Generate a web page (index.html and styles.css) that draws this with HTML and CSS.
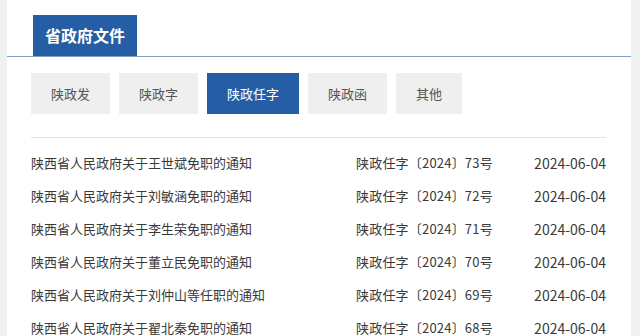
FILE: index.html
```html
<!DOCTYPE html>
<html lang="zh-CN">
    <head>
        <meta charset="UTF-8" />
        <meta name="viewport" content="width=device-width, initial-scale=1.0"/>
        <title>省政府文件</title>
        <link rel="stylesheet" href="styles.css">
    </head>
    <body>
        <div class="panel">
            <div class="head">
                <span class="head-title">省政府文件</span>
            </div>
            <div class="tabs">
                <a class="tab">陕政发</a>
                <a class="tab">陕政字</a>
                <a class="tab active">陕政任字</a>
                <a class="tab">陕政函</a>
                <a class="tab">其他</a>
            </div>
            <ul class="list">
                <li class="row">
                    <span class="row-title">陕西省人民政府关于王世斌免职的通知</span>
                    <span class="row-num">陕政任字〔2024〕73号</span>
                    <span class="row-date">2024-06-04</span>
                </li>
                <li class="row">
                    <span class="row-title">陕西省人民政府关于刘敏涵免职的通知</span>
                    <span class="row-num">陕政任字〔2024〕72号</span>
                    <span class="row-date">2024-06-04</span>
                </li>
                <li class="row">
                    <span class="row-title">陕西省人民政府关于李生荣免职的通知</span>
                    <span class="row-num">陕政任字〔2024〕71号</span>
                    <span class="row-date">2024-06-04</span>
                </li>
                <li class="row">
                    <span class="row-title">陕西省人民政府关于董立民免职的通知</span>
                    <span class="row-num">陕政任字〔2024〕70号</span>
                    <span class="row-date">2024-06-04</span>
                </li>
                <li class="row">
                    <span class="row-title">陕西省人民政府关于刘仲山等任职的通知</span>
                    <span class="row-num">陕政任字〔2024〕69号</span>
                    <span class="row-date">2024-06-04</span>
                </li>
                <li class="row">
                    <span class="row-title">陕西省人民政府关于翟北秦免职的通知</span>
                    <span class="row-num">陕政任字〔2024〕68号</span>
                    <span class="row-date">2024-06-04</span>
                </li>
            </ul>
        </div>
    </body>
</html>
```

FILE: styles.css
```css
body {
    margin: 0;
    background-color: #f1f1f1;
    font-family: "Noto Sans CJK SC", "Noto Sans", sans-serif;
    color: #333;
    height: 100vh;
    overflow: hidden;
}
.panel {
    margin-left: 7px;
    width: 624px;
    height: 100%;
    background-color: #fff;
    padding-top: 15px;
    box-sizing: border-box;
}
.head {
    padding-left: 26px;
    border-bottom: 1px solid #7f9bbd;
    display: flex;
}
.head-title {
    background-color: #265ea5;
    color: #fff;
    font-size: 16px;
    font-weight: bold;
    height: 41px;
    line-height: 41px;
    padding: 0 12px;
}
.tabs {
    display: flex;
    gap: 9px;
    margin: 16px 24px 0;
}
.tab {
    background-color: #efefef;
    color: #555;
    font-size: 13px;
    height: 41px;
    line-height: 41px;
    padding: 0 20px;
    cursor: pointer;
}
.tab.active {
    background-color: #265ea5;
    color: #fff;
}
.list {
    list-style: none;
    margin: 23px 25px 0 24px;
    padding: 8px 0 0;
    border-top: 1px solid #e3e3e3;
}
.row {
    display: flex;
    align-items: center;
    height: 33px;
    font-size: 13px;
    color: #3a3a3a;
}
.row-title {
    flex: 0 0 325px;
}
.row-num {
    flex: 1;
    letter-spacing: 0.2px;
}
.row-date {
    text-align: right;
    font-size: 14px;
}
```
